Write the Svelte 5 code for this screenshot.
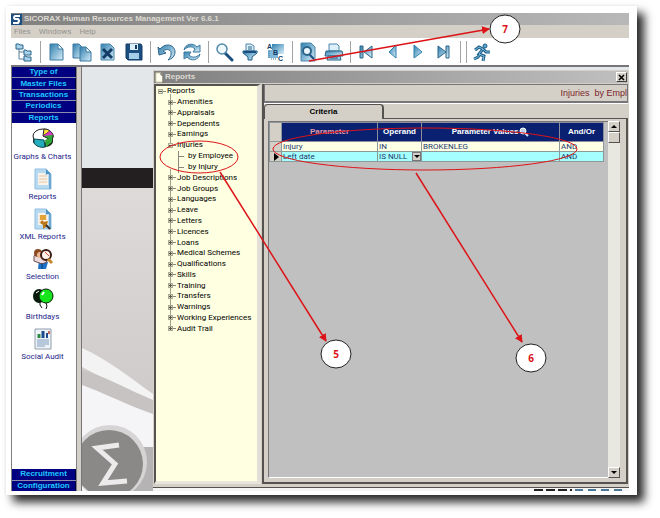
<script lang="ts">
    interface TreeItem {
        label: string;
        level: number;
        open?: boolean;
    }

    const menus = ["Files", "Windows", "Help"];

    const toolbar = [
        ["tree"],
        ["new", "copy", "delete", "save"],
        ["undo", "refresh"],
        ["search", "filter", "sort"],
        ["preview", "print"],
        ["first", "prev", "next", "last"],
        [],
        ["run"],
    ];

    const topSections = ["Type of", "Master Files", "Transactions", "Periodics", "Reports"];
    const bottomSections = ["Recruitment", "Configuration"];

    const shortcuts = [
        { icon: "chart", label: "Graphs & Charts" },
        { icon: "report", label: "Reports" },
        { icon: "xml", label: "XML Reports" },
        { icon: "selection", label: "Selection" },
        { icon: "balloons", label: "Birthdays" },
        { icon: "audit", label: "Social Audit" },
    ];

    const tree: TreeItem[] = [
        { label: "Reports", level: 0, open: true },
        { label: "Amenities", level: 1 },
        { label: "Appraisals", level: 1 },
        { label: "Dependents", level: 1 },
        { label: "Earnings", level: 1 },
        { label: "Injuries", level: 1, open: true },
        { label: "by Employee", level: 2 },
        { label: "by Injury", level: 2 },
        { label: "Job Descriptions", level: 1 },
        { label: "Job Groups", level: 1 },
        { label: "Languages", level: 1 },
        { label: "Leave", level: 1 },
        { label: "Letters", level: 1 },
        { label: "Licences", level: 1 },
        { label: "Loans", level: 1 },
        { label: "Medical Schemes", level: 1 },
        { label: "Qualifications", level: 1 },
        { label: "Skills", level: 1 },
        { label: "Training", level: 1 },
        { label: "Transfers", level: 1 },
        { label: "Warnings", level: 1 },
        { label: "Working Experiences", level: 1 },
        { label: "Audit Trail", level: 1 },
    ];

    let operand = $state("IS NULL");
</script>

{#snippet toolIcon(name: string)}
    <svg class="tool-icon" viewBox="0 0 20 20" aria-hidden="true">
        {#if name === "tree"}
            <path d="M5 6v11h5M5 10h5" fill="none" stroke="#5b7f96" />
            <path d="M2 2h3l1 1h3v4H2z" fill="#a9d3ea" stroke="#2b6488" />
            <path d="M10 8h2l1 1h4v4h-7zM10 14h2l1 1h4v4h-7z" fill="#a9d3ea" stroke="#2b6488" />
        {:else if name === "new"}
            <path d="M4 2h8l5 5v11H4z" fill="url(#steel)" stroke="#3d7ba0" />
            <path d="M12 2v5h5z" fill="#eaf6fc" stroke="#3d7ba0" />
        {:else if name === "copy"}
            <path d="M1 2h6l4 4v10H1z" fill="url(#steel)" stroke="#3d7ba0" />
            <path d="M8 5h6l5 5v9H8z" fill="url(#steel)" stroke="#3d7ba0" />
            <path d="M14 5v5h5z" fill="#eaf6fc" stroke="#3d7ba0" />
        {:else if name === "delete"}
            <path d="M3 2h9l4 4v12H3z" fill="url(#steel)" stroke="#4b86a9" />
            <path d="M5 7l9 9M14 7l-9 9" stroke="#123c66" stroke-width="3" />
        {:else if name === "save"}
            <path d="M2 2h15l1 2v14H4l-2-2z" fill="#1c4f80" stroke="#123c66" />
            <path d="M6 2h8v6H6z" fill="#dceffa" />
            <path d="M11 3h2v4h-2z" fill="#123c66" />
            <path d="M5 11h10v6H5z" fill="#a5cfe8" />
        {:else if name === "undo"}
            <path d="M2 5l1 8 7-2-3-2c4-3 9-1 8 3 0 2-1 4-3 6 4-1 7-4 7-8 0-7-9-10-15-3z" fill="url(#steel)" stroke="#2b6488" />
        {:else if name === "refresh"}
            <path d="M2 8c1-6 9-8 13-3l3-2v7h-7l2-3C10 4 6 4 2 8z" fill="url(#steel)" stroke="#3d7ba0" />
            <path d="M18 12c-1 6-9 8-13 3l-3 2v-7h7l-2 3c3 3 7 3 11-1z" fill="url(#steel)" stroke="#3d7ba0" />
        {:else if name === "search"}
            <path d="M11 11l7 7" stroke="#1c4f80" stroke-width="3" stroke-linecap="round" />
            <circle cx="8" cy="7" r="5" fill="#eef8fd" stroke="#5089aa" stroke-width="1.5" />
        {:else if name === "filter"}
            <path d="M6 2h5l3 2v5H6z" fill="#dceffa" stroke="#4b86a9" />
            <path d="M8 5h4M8 7h4" stroke="#2b6488" />
            <path d="M3 9h14v2l-5 4v3H8v-3l-5-4z" fill="url(#steel)" stroke="#1c5e8a" />
            <path d="M4 10h12" stroke="#1c4f80" stroke-width="2" />
        {:else if name === "sort"}
            <path d="M6 2h12v10H6z" fill="url(#steel)" />
            <path d="M2 8h10v8H2z" fill="#7db6d8" />
            <path d="M3 9v8M5 17h6" stroke="#3d7ba0" stroke-dasharray="1 1" />
            <text x="1" y="7" class="letter">A</text>
            <text x="7" y="13" class="letter">B</text>
            <text x="12" y="19" class="letter">C</text>
        {:else if name === "preview"}
            <path d="M3 1h10l4 4v14H3z" fill="url(#steel)" stroke="#4b86a9" />
            <path d="M11 12l5 5" stroke="#1c4f80" stroke-width="2" />
            <circle cx="9" cy="9" r="4" fill="#eaf6fc" stroke="#2b6488" stroke-width="2" />
        {:else if name === "print"}
            <path d="M5 2h8l2 2v5H5z" fill="#dceffa" stroke="#4b86a9" />
            <path d="M2 9h16l1 5H1z" fill="url(#steel)" stroke="#2b6488" />
            <path d="M4 14h12l1 4H3z" fill="#a5cfe8" stroke="#2b6488" />
            <path d="M6 16h8" stroke="#1c4f80" />
        {:else if name === "first"}
            <path d="M4 4v12h3V4zM16 4v12l-8-6z" fill="url(#steel)" stroke="#2b6488" />
        {:else if name === "prev"}
            <path d="M14 3v13L7 10z" fill="url(#steel)" stroke="#2b7fab" />
        {:else if name === "next"}
            <path d="M6 3v13l8-6z" fill="url(#steel)" stroke="#2b7fab" />
        {:else if name === "last"}
            <path d="M4 4v12l8-6zM12 4v12h3V4z" fill="url(#steel)" stroke="#2b6488" />
        {:else if name === "run"}
            <circle cx="13" cy="4" r="2" fill="#5fa6cd" stroke="#1c5e8a" />
            <path d="M3 8l4-3 4 2 3 3h4M11 7l-4 5 5 2-1 5M8 12l-2 3-4 2" fill="none" stroke="#1c5e8a" stroke-width="3" />
            <path d="M3 8l4-3 4 2 3 3h4M11 7l-4 5 5 2-1 5M8 12l-2 3-4 2" fill="none" stroke="#7fbcdc" />
        {/if}
    </svg>
{/snippet}

{#snippet shortcutIcon(name: string)}
    <svg class="shortcut-icon" viewBox="0 0 22 22" aria-hidden="true">
        {#if name === "chart"}
            <path d="M1 9v5c3 7 18 7 20 0V8z" fill="#222" />
            <ellipse cx="11" cy="8" rx="10" ry="7" fill="#fff" stroke="#222" />
            <path d="M11 8l7-5c4 3 4 7 1 9z" fill="#2fa838" stroke="#222" />
            <path d="M11 8l1-7c3 0 5 1 6 2z" fill="#ffe437" stroke="#222" />
            <path d="M11 8l7-5 3 4z" fill="#d936c6" />
            <path d="M13 12l7-3v5l-6 5z" fill="#2fa838" />
            <path d="M2 11l10 1 1 7c-5 1-10-1-11-5z" fill="#24aebd" stroke="#124b52" />
        {:else if name === "report" || name === "xml"}
            <path d="M3 1h11l5 5v15H3z" fill="#b7daf0" stroke="#8fbfe0" />
            <path d="M14 1v5h5z" fill="#4f93c4" />
            <path d="M17 6h2v15h-2z" fill="#6ea7cf" />
            <path d="M6 5h7v2h3v10H6z" fill="#f7f3ea" />
            <path d="M7 8h8M7 11h8M7 14h8" stroke="#e6c7a8" />
            {#if name === "xml"}
                <path d="M8 7h6v5H8z" fill="#e3a437" />
                <path d="M10 12l2 2 4-1-1 4 3 3-4-1-3 2v-4l-3-2z" fill="#b9781c" />
                <path d="M14 17l4 4" stroke="#333" stroke-width="2" />
            {/if}
        {:else if name === "selection"}
            <path d="M7 12l9 2-2 7H6z" fill="#1a72c9" />
            <path d="M2 8c2-3 7-3 10 1l3 5-5 2-8-3z" fill="#ead9dd" stroke="#6b4a4a" />
            <circle cx="6" cy="5" r="4" fill="#8a4a22" />
            <circle cx="8" cy="7" r="3" fill="#f0b995" />
            <circle cx="14" cy="7" r="5" fill="#fff3ec" stroke="#3b1c14" stroke-width="2" />
            <path d="M13 4l4 4" stroke="#d4483b" />
            <path d="M16 11l4 4" stroke="#c8862c" stroke-width="3" />
            <path d="M10 15v6" stroke="#0b3d78" />
        {:else if name === "balloons"}
            <path d="M8 13v4l2 3M14 15l1 3-1 3" fill="none" stroke="#111" />
            <ellipse cx="7" cy="8" rx="6" ry="7" fill="#06190a" />
            <path d="M4 5l3-2" stroke="#fff" />
            <circle cx="14" cy="8" r="7" fill="#17e51b" stroke="#06190a" />
            <path d="M12 4l-2 3" stroke="#fff" stroke-width="2" />
        {:else}
            <path d="M3 1h16v20H3z" fill="#eef3f8" stroke="#8f9dab" />
            <path d="M7 10V6" stroke="#2a8a3d" stroke-width="3" />
            <path d="M11 10V3" stroke="#1b4a8f" stroke-width="3" />
            <path d="M15 10V5" stroke="#1b4a8f" stroke-width="2" />
            <path d="M16 3h2v3h-2z" fill="#c76b5a" />
            <path d="M5 12h12M5 14h12M5 16h12M5 18h8" stroke="#7f9cbd" />
        {/if}
    </svg>
{/snippet}

<div class="page">
    <svg class="defs" width="0" height="0" aria-hidden="true">
        <defs>
            <linearGradient id="steel" x1="0" y1="0" x2="1" y2="1">
                <stop offset="0" stop-color="#2f7fae" />
                <stop offset="1" stop-color="#d8eefa" />
            </linearGradient>
        </defs>
    </svg>

    <div class="card">
        <header class="titlebar">
            <svg class="brand" viewBox="0 0 11 11" aria-hidden="true">
                <path d="M0 0h11v11H0z" fill="#1c4f80" />
                <path d="M9 2H4Q2 4 4 5h3q2 2 0 4H2" fill="none" stroke="#fff" stroke-width="2" />
            </svg>
            <h1>SICORAX Human Resources Management Ver 6.6.1</h1>
        </header>

        <nav class="menubar">
            {#each menus as menu}
                <button type="button">{menu}</button>
            {/each}
        </nav>

        <div class="toolbar" role="toolbar" aria-label="Main">
            {#each toolbar as group, i}
                {#if i > 0}<span class="separator"></span>{/if}
                {#each group as name}
                    <button type="button" aria-label={name}>{@render toolIcon(name)}</button>
                {/each}
            {/each}
        </div>

        <div class="body">
            <aside class="sidebar">
                <div class="sections">
                    {#each topSections as section}
                        <button type="button">{section}</button>
                    {/each}
                </div>
                <div class="shortcuts">
                    {#each shortcuts as item}
                        <button type="button">
                            {@render shortcutIcon(item.icon)}
                            <span>{item.label}</span>
                        </button>
                    {/each}
                </div>
                <div class="sections bottom">
                    {#each bottomSections as section}
                        <button type="button">{section}</button>
                    {/each}
                </div>
            </aside>

            <main class="workspace">
                <svg class="backdrop" viewBox="0 0 547 424" preserveAspectRatio="xMinYMax slice" aria-hidden="true">
                    <path d="M0 0h547v101H0z" fill="#e4e7ea" />
                    <path d="M0 101h547v20H0z" fill="#231f20" />
                    <path d="M0 121h547v303H0z" fill="url(#haze)" />
                    <path d="M0 281C25 292 50 312 71 327v8C45 325 20 310 0 300z" fill="#f4f3f3" />
                    <path d="M0 303C20 308 45 322 71 333v14C45 338 20 325 0 318z" fill="#c6c3c2" />
                    <path d="M0 318C20 325 45 338 71 347v77H0z" fill="#f5f5f7" />
                    <path d="M50 380h497v44H50z" fill="#b5b3b3" />
                    <circle cx="28" cy="395" r="37" fill="#d6d4d4" />
                    <circle cx="27" cy="397" r="34" fill="#8b8888" />
                    <!-- summation mark of the brand disc -->
                    <path d="M37 378l-22 3 18 16-12 19 24-2" fill="none" stroke="#eceaea" stroke-width="5" />
                    <path d="M71 421h476v3H71z" fill="#f5f5f5" />
                    <path d="M452 423h38" stroke="#222" stroke-width="2" stroke-dasharray="9 3" />
                    <path d="M493 423h50" stroke="#4b7896" stroke-width="2" stroke-dasharray="8 5" />
                    <defs>
                        <linearGradient id="haze" x1="0" y1="0" x2="0" y2="1">
                            <stop offset="0" stop-color="#dedad9" />
                            <stop offset="0.7" stop-color="#cfcbca" />
                        </linearGradient>
                    </defs>
                </svg>

                <section class="window">
                    <div class="window-title">
                        <svg class="page-icon" viewBox="0 0 9 11" aria-hidden="true">
                            <path d="M1 1h5l2 2v7H1z" fill="#fffef0" stroke="#d8d4b0" />
                            <path d="M8 3v8M6 1v2h2" fill="none" stroke="#555" />
                        </svg>
                        <h2>Reports</h2>
                        <button type="button" class="close" aria-label="Close">
                            <svg viewBox="0 0 7 7"><path d="M1 1l5 5M6 1L1 6" stroke="#000" stroke-width="1.5" /></svg>
                        </button>
                    </div>

                    <div class="window-body">
                        <div class="tree-pane">
                            <ul class="tree">
                                {#each tree as item}
                                    <li class="level-{item.level}">
                                        {#if item.level === 2}
                                            <span class="branch"></span>
                                        {:else}
                                            <span class="toggle" class:open={item.open}></span>
                                        {/if}
                                        <button type="button">{item.label}</button>
                                    </li>
                                {/each}
                            </ul>
                        </div>

                        <div class="detail">
                            <div class="caption">Injuries&nbsp; by Empl</div>
                            <div class="tabs">
                                <button type="button" class="tab">Criteria</button>
                                <span class="tab-rest"></span>
                            </div>
                            <div class="tab-panel">
                                <div class="grid">
                                    <table>
                                        <colgroup>
                                            <col class="col-mark" />
                                            <col class="col-param" />
                                            <col class="col-operand" />
                                            <col />
                                            <col class="col-logic" />
                                        </colgroup>
                                        <thead>
                                            <tr>
                                                <td class="mark"></td>
                                                <th class="active">Parameter</th>
                                                <th>Operand</th>
                                                <th>
                                                    <span class="with-icon">
                                                        Parameter Values
                                                        <svg viewBox="0 0 10 10" aria-hidden="true">
                                                            <path d="M6 6l3 3" stroke="#cfe0f5" stroke-width="2" />
                                                            <circle cx="4" cy="4" r="3" fill="#b9d0ea" stroke="#fff" />
                                                        </svg>
                                                    </span>
                                                </th>
                                                <th>And/Or</th>
                                            </tr>
                                        </thead>
                                        <tbody>
                                            <tr>
                                                <td class="mark"></td>
                                                <td>Injury</td>
                                                <td>IN</td>
                                                <td>BROKENLEG</td>
                                                <td>AND</td>
                                            </tr>
                                            <tr class="current">
                                                <td class="mark"><span class="pointer"></span></td>
                                                <td>Left date</td>
                                                <td class="operand">
                                                    <span class="select-wrap">
                                                        <select aria-label="Operand" bind:value={operand}>
                                                            <option>IS NULL</option>
                                                            <option>IN</option>
                                                        </select>
                                                        <span class="drop"><span class="arrow-down"></span></span>
                                                    </span>
                                                </td>
                                                <td></td>
                                                <td>AND</td>
                                            </tr>
                                        </tbody>
                                    </table>
                                </div>
                                <div class="scrollbar">
                                    <button type="button" aria-label="Scroll up"><span class="arrow-up"></span></button>
                                    <span class="thumb"></span>
                                    <span class="track"></span>
                                    <button type="button" aria-label="Scroll down"><span class="arrow-down"></span></button>
                                </div>
                            </div>
                        </div>
                    </div>
                </section>
            </main>
        </div>
    </div>

    <!-- numbered callouts drawn over the window -->
    <svg class="callouts" width="660" height="518" viewBox="0 0 660 518">
        <defs>
            <marker id="head" viewBox="0 0 8 8" refX="7" refY="4" markerWidth="8" markerHeight="8" markerUnits="userSpaceOnUse" orient="auto">
                <path d="M0 0l8 4-8 4z" fill="#dc1418" />
            </marker>
        </defs>
        <g fill="none" stroke="#dc1418">
            <ellipse cx="199" cy="157" rx="39" ry="16" />
            <ellipse cx="425" cy="149" rx="152" ry="21" />
            <g stroke-width="1.5">
                <path d="M220 172L326 341" marker-end="url(#head)" />
                <path d="M416 173L522 342" marker-end="url(#head)" />
                <path d="M309 61L489 29" marker-end="url(#head)" />
            </g>
        </g>
        <g fill="#fff" stroke="#222">
            <ellipse cx="336" cy="354" rx="15" ry="14" />
            <ellipse cx="531" cy="358" rx="15" ry="14" />
            <ellipse cx="505" cy="29" rx="15" ry="14" />
        </g>
        <g class="callout-text">
            <text x="336" y="358">5</text>
            <text x="531" y="362">6</text>
            <text x="505" y="33">7</text>
        </g>
    </svg>
</div>

<style>
    :global(body) {
        margin: 0;
        background: #fff;
    }

    .page {
        --bold-font: bold 8px/10px "Liberation Sans", Arial, sans-serif;
        position: relative;
        box-sizing: border-box;
        min-height: 100vh;
        padding: 6px 23px 23px 6px;
        display: flex;
        overflow: hidden;
        font-family: Roboto, "Liberation Sans", sans-serif;
        font-size: 8px;
        line-height: 10px;
        color: #000;
    }

    .defs {
        position: absolute;
    }

    button {
        margin: 0;
        padding: 0;
        border: 0;
        background: none;
        font: inherit;
        color: inherit;
    }

    h1,
    h2 {
        margin: 0;
        font: var(--bold-font);
        color: #dedad2;
    }

    .card {
        flex: 1;
        min-width: 0;
        display: flex;
        flex-direction: column;
        padding: 7px 8px 4px 5px;
        background: #fff;
        box-shadow: 7px 7px 9px rgba(0, 0, 0, 0.85), 0 0 3px #eee;
    }

    .titlebar {
        display: flex;
        align-items: center;
        gap: 2px;
        height: 12px;
        background: linear-gradient(90deg, #808080, #b8b8b8);
    }

    .brand {
        width: 11px;
        height: 11px;
    }

    .menubar {
        display: flex;
        gap: 8px;
        height: 13px;
        padding-left: 3px;
        background: #d4d0c8;
        color: #96938c;
    }

    .toolbar {
        display: flex;
        align-items: center;
        height: 27px;
        border-bottom: 2px solid #77757a;
    }

    .toolbar button {
        width: 26px;
        height: 20px;
    }

    .tool-icon {
        display: block;
        width: 20px;
        height: 20px;
        margin: 0 auto;
    }

    .letter {
        font-family: "Liberation Sans", Arial, sans-serif;
        font-size: 7px;
        font-weight: bold;
        fill: #123c66;
    }

    .separator {
        width: 1px;
        height: 22px;
        margin: 0 2px 0 3px;
        background: #a5a3a8;
    }

    .body {
        flex: 1;
        display: flex;
    }

    .sidebar {
        display: flex;
        flex-direction: column;
        width: 64px;
        border-left: 1px solid #808080;
        border-right: 1px solid #808080;
        background: #fff;
    }

    .sections {
        display: grid;
        grid-auto-rows: 1fr;
        height: 56px;
        background: #8c8cae;
        gap: 1px;
    }

    .sections button {
        background: #000080;
        border-right: 1px solid #000040;
        color: #1fc8ff;
        font: var(--bold-font);
    }

    .sections.bottom {
        height: 22px;
        margin-top: auto;
    }

    .shortcuts {
        display: flex;
        flex-direction: column;
        gap: 6px;
        padding: 5px 3px 0 0;
    }

    .shortcuts button {
        display: flex;
        flex-direction: column;
        align-items: center;
        gap: 2px;
        color: #24248a;
        white-space: nowrap;
    }

    .shortcut-icon {
        width: 22px;
        height: 22px;
    }

    .workspace {
        position: relative;
        flex: 1;
        min-width: 0;
        display: flex;
        padding: 3px 0 3px 71px;
        border-left: 1px solid #77757a;
        margin-left: 4px;
        box-shadow: -4px 0 0 #d4d0c8;
    }

    .backdrop {
        position: absolute;
        inset: 0;
        width: 100%;
        height: 100%;
    }

    .window {
        position: relative;
        flex: 1;
        min-width: 0;
        display: flex;
        flex-direction: column;
        padding: 1px;
        background: #d4d0c8;
        border-bottom: 1px solid #55534f;
    }

    .window-title {
        display: flex;
        align-items: center;
        gap: 1px;
        height: 12px;
        padding: 0 1px;
        background: linear-gradient(90deg, #808080, #c0c0c0);
    }

    .page-icon {
        width: 9px;
        height: 11px;
    }

    .close {
        display: flex;
        align-items: center;
        justify-content: center;
        width: 11px;
        height: 10px;
        margin-left: auto;
        background: #d4d0c8;
        border: 1px solid;
        border-color: #fff #404040 #404040 #fff;
    }

    .close svg {
        width: 7px;
        height: 7px;
    }

    .window-body {
        flex: 1;
        display: flex;
        gap: 1px;
        padding: 1px 0 2px;
    }

    .tree-pane {
        width: 101px;
        border: solid #55534f;
        border-width: 2px 0 0 2px;
        border-right: 4px solid #e2dfd6;
        border-bottom: 3px solid #e8e5dc;
        background: #ffffe1;
    }

    .tree {
        display: grid;
        grid-auto-rows: 1fr;
        height: 248px;
        margin: 0;
        padding: 0 0 0 2px;
        list-style: none;
    }

    .tree li {
        display: flex;
        align-items: center;
        gap: 4px;
        white-space: nowrap;
    }

    .tree .level-1 {
        padding-left: 10px;
    }

    .tree .level-2 {
        padding-left: 22px;
    }

    .toggle {
        position: relative;
        width: 5px;
        height: 5px;
        background: linear-gradient(#55554c, #55554c) center / 3px 1px no-repeat,
            linear-gradient(#55554c, #55554c) center / 1px 3px no-repeat #d9d9c2;
        box-shadow: 0 0 0 1px #a9a994 inset;
    }

    .toggle.open {
        background: linear-gradient(#55554c, #55554c) center / 3px 1px no-repeat #e9e9d2;
    }

    .toggle::after {
        content: "";
        position: absolute;
        left: 5px;
        top: 2px;
        width: 3px;
        border-top: 1px solid #88887a;
    }

    .level-1 .toggle::before {
        content: "";
        position: absolute;
        left: 2px;
        top: -6px;
        height: 6px;
        border-left: 1px solid #a0a090;
    }

    .branch {
        width: 6px;
        height: 11px;
        margin-left: -2px;
        background: linear-gradient(#88887a, #88887a) left center / 6px 1px no-repeat,
            linear-gradient(#88887a, #88887a) left top / 1px 100% no-repeat;
    }

    .detail {
        flex: 1;
        min-width: 0;
        display: flex;
        flex-direction: column;
        border-left: 2px solid #55534f;
    }

    .caption {
        height: 16px;
        border: 1px solid #77757a;
        border-bottom: 2px solid #77757a;
        font-family: "Liberation Sans", Arial, sans-serif;
        font-size: 9px;
        line-height: 16px;
        text-align: right;
        white-space: nowrap;
        color: #7d1f2b;
    }

    .tabs {
        display: flex;
        height: 15px;
        border-top: 1px solid #fff;
    }

    .tab {
        width: 120px;
        border: 1px solid #55534f;
        border-width: 1px 2px 0 1px;
        border-radius: 4px 4px 0 0;
        font: var(--bold-font);
    }

    .tab-rest {
        flex: 1;
        border-bottom: 1px solid #55534f;
    }

    .tab-panel {
        flex: 1;
        display: flex;
        padding: 2px 6px 4px 4px;
        border: solid #55534f;
        border-width: 0 2px 2px 0;
    }

    .grid {
        flex: 1;
        min-width: 0;
        padding-right: 4px;
        border: solid #77757a;
        border-width: 1px 0 0 1px;
        border-bottom: 1px solid #fff;
        background: #c0c0c0;
    }

    table {
        width: 100%;
        table-layout: fixed;
        border-collapse: collapse;
    }

    .col-mark {
        width: 12px;
    }

    .col-param {
        width: 96px;
    }

    .col-operand {
        width: 44px;
    }

    .col-logic {
        width: 44px;
    }

    th {
        height: 18px;
        padding: 0;
        background: #0a2070;
        border: 1px solid #8c8c9a;
        color: #fff;
        font: var(--bold-font);
        white-space: nowrap;
    }

    th.active {
        color: #e09aa8;
    }

    .with-icon {
        display: inline-flex;
        align-items: center;
        gap: 1px;
    }

    .with-icon svg {
        width: 10px;
        height: 10px;
    }

    td {
        height: 9px;
        padding: 0 0 0 1px;
        background: #ffffe6;
        border: 1px solid #8c9a9a;
        line-height: 9px;
        color: #1b3a6e;
        white-space: nowrap;
    }

    .current td {
        background: #a6ffff;
    }

    td.mark,
    .current td.mark {
        padding: 0;
        background: #d4d0c8;
    }

    .pointer {
        display: block;
        width: 0;
        margin-left: 4px;
        border: solid transparent;
        border-width: 4px 0 4px 5px;
        border-left-color: #000;
    }

    .select-wrap {
        display: flex;
        height: 9px;
    }

    select {
        flex: 1;
        min-width: 0;
        margin: 0;
        padding: 0;
        border: 0;
        appearance: none;
        background: none;
        font: inherit;
        color: inherit;
    }

    .drop {
        display: flex;
        align-items: center;
        justify-content: center;
        width: 9px;
        background: #d4d0c8;
        box-shadow: 0 0 0 1px #77757a inset;
    }

    .arrow-down,
    .arrow-up {
        width: 0;
        border: solid transparent;
    }

    .arrow-down {
        border-width: 3px 3px 0;
        border-top-color: #000;
    }

    .arrow-up {
        border-width: 0 3px 3px;
        border-bottom-color: #000;
    }

    .scrollbar {
        display: flex;
        flex-direction: column;
        width: 12px;
        background: #e8e7e0;
    }

    .scrollbar button,
    .thumb {
        display: flex;
        align-items: center;
        justify-content: center;
        box-sizing: border-box;
        width: 12px;
        height: 11px;
        background: #d4d0c8;
        border: 1px solid;
        border-color: #fff #55534f #55534f #fff;
    }

    .track {
        flex: 1;
    }

    .callouts {
        position: absolute;
        top: 0;
        left: 0;
        pointer-events: none;
    }

    .callout-text {
        font-family: "Open Sans", sans-serif;
        font-size: 10px;
        font-weight: bold;
        text-anchor: middle;
        fill: #dc1418;
    }
</style>
